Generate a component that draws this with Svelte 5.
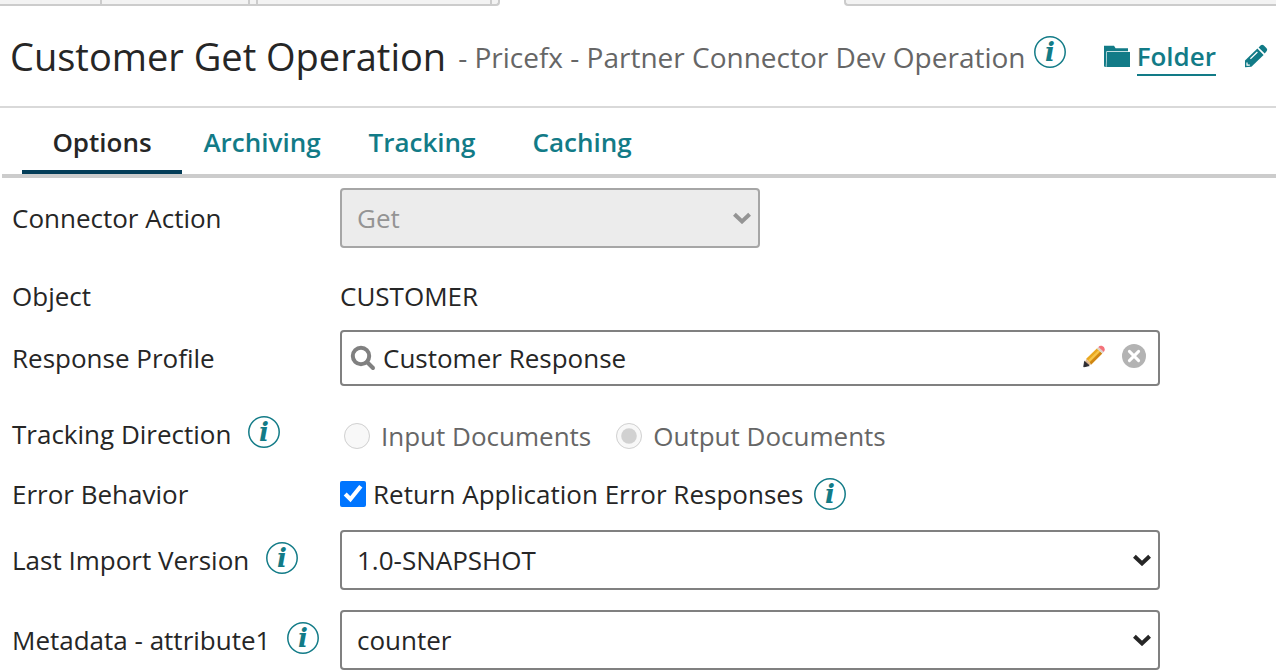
<script lang="ts">
	interface SelectField {
		id: string;
		label: string;
		options: string[];
	}

	const tabs = ['Options', 'Archiving', 'Tracking', 'Caching'];

	const versionFields: SelectField[] = [
		{ id: 'import-version', label: 'Last Import Version', options: ['1.0-SNAPSHOT'] },
		{ id: 'attribute1', label: 'Metadata - attribute1', options: ['counter'] }
	];

	let activeTab = $state('Options');
	let profile = $state('Customer Response');
	let direction = $state('output');
	let returnErrors = $state(true);
</script>

{#snippet info(topic: string)}
	<button type="button" class="info" aria-label="Help: {topic}">
		<svg viewBox="0 0 32 32" aria-hidden="true">
			<circle cx="16" cy="16" r="15.2" fill="none" stroke="currentColor" stroke-width="1.5" />
			<text x="16" y="25" text-anchor="middle" fill="currentColor">i</text>
		</svg>
	</button>
{/snippet}

{#snippet chevron()}
	<svg class="chevron" viewBox="0 0 18 12" aria-hidden="true">
		<path d="M1.4 2.2 9 9.4l7.6-7.2" fill="none" stroke="currentColor" stroke-width="4" />
	</svg>
{/snippet}

<div class="doc-strip" aria-hidden="true">
	<span class="doc first"></span>
	<span class="doc second"></span>
	<span class="doc divider"></span>
	<span class="doc third"></span>
	<span class="doc last"></span>
	<span class="doc current"></span>
	<span class="doc rest"></span>
</div>

<header class="header">
	<h1>Customer Get Operation</h1>
	<span class="subtitle">- Pricefx - Partner Connector Dev Operation</span>
	{@render info('operation')}
	<div class="actions">
		<svg class="folder-icon" viewBox="0 0 26 23" aria-hidden="true">
			<path d="M0 .8h10l1.6 2.4H24v3H2.4L1.8 22H.8L0 21z" fill="currentColor" />
			<path d="M3 7h23v15H2.4z" fill="currentColor" />
		</svg>
		<a href="#folder">Folder</a>
		<button type="button" class="edit" aria-label="Edit">
			<svg viewBox="0 0 24 24" aria-hidden="true">
				<path d="M1 16.4 13.4 4.6l6.2 6.3L7.4 22.8 1 23.2z" fill="currentColor" />
				<path
					d="m14.6 3.4 2.2-2.1q1.4-1.2 2.8 0l3 3q1.3 1.4 0 2.9l-1.9 2.4z"
					fill="currentColor"
				/>
				<path d="M6.4 14.8 13.4 8M3 18.4v2.8h2.8" fill="none" stroke="#fff" stroke-width="1.2" />
			</svg>
		</button>
	</div>
</header>

<nav class="tabs" role="tablist">
	{#each tabs as tab}
		<button
			type="button"
			role="tab"
			class="tab"
			class:active={activeTab === tab}
			aria-selected={activeTab === tab}
			onclick={() => (activeTab = tab)}
		>
			{tab}
		</button>
	{/each}
</nav>

<form class="fields">
	<div class="row">
		<div class="label"><label for="action">Connector Action</label></div>
		<div class="select narrow disabled">
			<select id="action" disabled>
				<option>Get</option>
			</select>
			{@render chevron()}
		</div>
	</div>

	<div class="row object">
		<div class="label">Object</div>
		<div>CUSTOMER</div>
	</div>

	<div class="row">
		<div class="label"><label for="profile">Response Profile</label></div>
		<div class="picker">
			<svg class="search-icon" viewBox="0 0 26 26" aria-hidden="true">
				<circle cx="11" cy="11" r="8.2" fill="none" stroke="currentColor" stroke-width="4" />
				<path d="m17 17 6 6" stroke="currentColor" stroke-width="4" stroke-linecap="round" />
			</svg>
			<input id="profile" type="text" bind:value={profile} />
			<button type="button" class="picker-button" aria-label="Edit profile">
				<svg viewBox="0 0 24 24" aria-hidden="true">
					<path d="M4.2 14.8 14.8 4.6l5.4 5L9.2 20.4z" fill="#e9a820" />
					<path d="M6 16.4 16.4 6.2l1.6 1.4L7.6 18z" fill="#f7c64a" />
					<path d="m7.6 18.6 10.8-10.8 1.8 1.8L9.2 20.4z" fill="#cf8614" />
					<path d="m14.8 4.6 1.6-1.6 5.4 5-1.6 1.6z" fill="#ddd3c9" />
					<path d="M16.4 3q1.4-1.8 3.4-1.2 2.8.8 3 3.4 0 1.6-1 2.8z" fill="#f4727a" />
					<path d="m4.2 14.8 5 5.6-7.4 2z" fill="#dfb78d" />
					<path d="m2.6 17.4 4.6 4.2-5.4 1.2z" fill="#2b2b30" stroke="#2b2b30" />
				</svg>
			</button>
			<button type="button" class="picker-button" aria-label="Clear profile" onclick={() => (profile = '')}>
				<svg viewBox="0 0 24 24" aria-hidden="true">
					<circle cx="12" cy="12" r="12" fill="#b3b3b3" />
					<path d="m7.4 7.4 9.2 9.2M16.6 7.4l-9.2 9.2" stroke="#fff" stroke-width="3" stroke-linecap="round" />
				</svg>
			</button>
		</div>
	</div>

	<div class="row tracking">
		<div class="label">
			<span id="direction-label">Tracking Direction</span>
			{@render info('Tracking Direction')}
		</div>
		<div class="radios" role="radiogroup" aria-labelledby="direction-label">
			<label><input type="radio" value="input" bind:group={direction} disabled /> Input Documents</label>
			<label><input type="radio" value="output" bind:group={direction} disabled /> Output Documents</label>
		</div>
	</div>

	<div class="row errors">
		<div class="label">Error Behavior</div>
		<div class="check">
			<label><input type="checkbox" bind:checked={returnErrors} /> Return Application Error Responses</label>
			{@render info('Error Behavior')}
		</div>
	</div>

	{#each versionFields as field}
		<div class="row">
			<div class="label">
				<label for={field.id}>{field.label}</label>
				{@render info(field.label)}
			</div>
			<div class="select">
				<select id={field.id}>
					{#each field.options as option}
						<option>{option}</option>
					{/each}
				</select>
				{@render chevron()}
			</div>
		</div>
	{/each}
</form>

<style>
	:global(body) {
		background: #fff;
		color: #262626;
		font: 26px/36px 'Open Sans', sans-serif;
		overflow: hidden;
	}

	button,
	input,
	select {
		font: inherit;
		color: inherit;
	}

	button {
		padding: 0;
		border: 0;
		background: none;
		cursor: pointer;
	}

	svg {
		display: block;
	}

	.doc-strip {
		display: flex;
		height: 6px;
	}

	.doc {
		box-sizing: border-box;
		background: #f3f3f3;
		border-right: 2px solid #ccc;
		border-bottom: 2px solid #ccc;
	}

	.first {
		width: 102px;
	}

	.second {
		width: 148px;
	}

	.divider {
		width: 8px;
	}

	.third {
		width: 234px;
	}

	.last {
		width: 8px;
		border-bottom-right-radius: 4px;
	}

	.current {
		width: 344px;
		background: none;
		border: 0;
	}

	.rest {
		flex: 1;
		border-right: 0;
		border-left: 2px solid #ccc;
		border-bottom-left-radius: 4px;
	}

	.header {
		display: flex;
		align-items: center;
		height: 100px;
		padding: 0 8px 0 10px;
		border-bottom: 2px solid #d9d9d9;
		white-space: nowrap;
	}

	h1 {
		margin: 0;
		font-size: 38px;
		font-weight: 400;
		line-height: 56px;
	}

	.subtitle {
		margin: 2px 8px 0 12px;
		color: #666;
		font-size: 28px;
	}

	.info {
		flex: none;
		color: #127b87;
	}

	.info svg {
		width: 32px;
		height: 32px;
	}

	.info text {
		font: italic bold 26px 'DejaVu Serif', serif;
	}

	.header .info {
		margin-bottom: 8px;
	}

	.actions {
		display: flex;
		align-items: center;
		margin-left: auto;
		color: #127b87;
	}

	.actions a {
		margin: 2px 28px 0 7px;
		border-bottom: 2px solid #127b87;
		color: #127b87;
		font-weight: 600;
		text-decoration: none;
	}

	.folder-icon {
		width: 26px;
		height: 23px;
	}

	.edit {
		color: #127b87;
	}

	.edit svg {
		width: 24px;
		height: 24px;
	}

	.tabs {
		display: flex;
		margin-left: 2px;
		padding-left: 20px;
		border-bottom: 4px solid #ccc;
	}

	.tab {
		width: 160px;
		height: 66px;
		padding-top: 6px;
		border-bottom: 4px solid transparent;
		color: #127b87;
		font-weight: 600;
	}

	.tab.active {
		border-color: #033d58;
		color: #262626;
	}

	.row {
		display: grid;
		grid-template-columns: 328px minmax(0, 820px);
		align-items: center;
		padding: 10px 12px;
	}

	.row.object {
		padding: 20px 12px 6px;
	}

	.row.tracking {
		padding: 18px 12px 16px;
	}

	.row.errors {
		padding: 6px 12px 8px;
	}

	.label {
		display: flex;
		align-items: center;
		gap: 17px;
	}

	.label .info {
		margin-bottom: 4px;
	}

	.select {
		position: relative;
	}

	.narrow {
		max-width: 420px;
	}

	select {
		box-sizing: border-box;
		display: block;
		width: 100%;
		height: 60px;
		padding: 0 40px 0 15px;
		border: 2px solid #808080;
		border-radius: 4px;
		background: #fff;
		appearance: none;
	}

	.disabled select {
		border-color: #a6a6a6;
		background: #ececec;
		color: #949494;
		opacity: 1;
	}

	.chevron {
		position: absolute;
		top: 24px;
		right: 9px;
		width: 18px;
		height: 12px;
		pointer-events: none;
	}

	.disabled .chevron {
		color: #949494;
	}

	.picker {
		box-sizing: border-box;
		display: flex;
		align-items: center;
		height: 56px;
		padding: 0 12px 0 8px;
		border: 2px solid #808080;
		border-radius: 4px;
	}

	.search-icon {
		width: 26px;
		height: 26px;
		color: #808080;
	}

	.picker input {
		flex: 1;
		min-width: 0;
		padding: 0 7px;
		border: 0;
		outline: 0;
		background: none;
	}

	.picker-button {
		margin: 0 0 4px 16px;
	}

	.picker-button svg {
		width: 24px;
		height: 24px;
	}

	.radios,
	.check {
		display: flex;
		align-items: center;
	}

	.radios {
		gap: 25px;
		padding: 4px 0 0 4px;
		color: #666;
	}

	.radios label,
	.check label {
		display: flex;
		align-items: center;
	}

	.check {
		gap: 11px;
	}

	input[type='radio'],
	input[type='checkbox'] {
		width: 26px;
		height: 26px;
		margin: 0 11px 0 0;
	}

	input[type='checkbox'] {
		margin-right: 7px;
	}
</style>
